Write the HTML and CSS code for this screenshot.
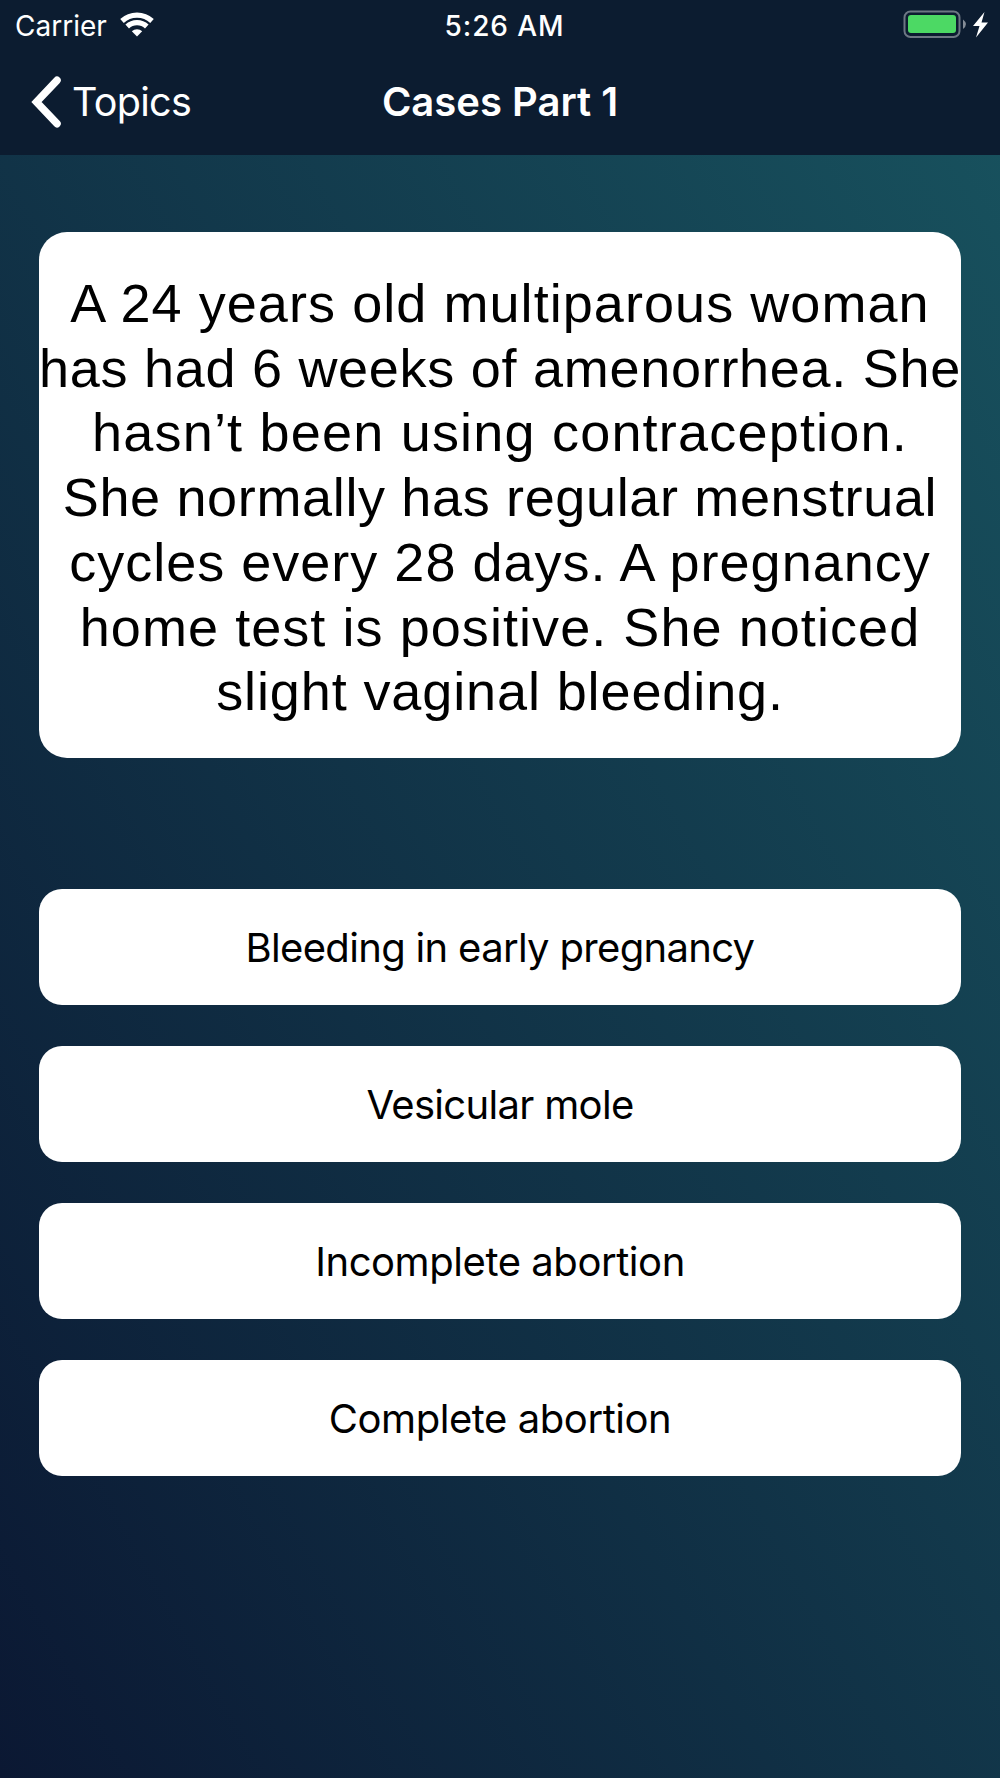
FILE: index.html
```
<!DOCTYPE html>
<html lang="en">
<head>
    <meta charset="UTF-8">
    <meta name="viewport" content="width=device-width, initial-scale=1.0">
    <title>Cases Part 1</title>
    <link rel="stylesheet" href="styles.css">
</head>
<body>
    <header>
        <div class="status-bar">
            <div class="carrier">
                <span class="carrier-name">Carrier</span>
                <svg class="wifi" width="34" height="25" viewBox="0 0 34 25">
                    <path d="M2 9a22 22 0 0 1 30 0" />
                    <path d="M7.200 14.500a14.200 14.200 0 0 1 19.600 0" />
                    <path class="dot" d="M17 24.500l-5.200-5.200a7.500 7.500 0 0 1 10.400 0z" />
                </svg>
            </div>
            <span class="time">5:26 AM</span>
            <div class="power">
                <svg width="88" height="30" viewBox="0 0 88 30">
                    <rect class="battery" x="2.500" y="1.500" width="55" height="25.500" rx="6" />
                    <rect class="charge" x="6" y="5" width="48" height="18" rx="3" />
                    <path class="cap" d="M61 9.500q6 4.700 0 9.400z" />
                    <path class="bolt" d="M82.500 2l-11.500 14h6.500l-3.500 11.500 12-15h-6.500z" />
                </svg>
            </div>
        </div>
        <nav>
            <a class="back" href="#">
                <svg width="30" height="52" viewBox="0 0 30 52">
                    <path d="M26 4.300L5.500 26l20.500 21.700" />
                </svg>
                <span class="back-label">Topics</span>
            </a>
            <h1>Cases Part 1</h1>
        </nav>
    </header>

    <main>
        <p class="question">
            <span class="line l1">A 24 years old multiparous woman</span>
            <span class="line l2">has had 6 weeks of amenorrhea. She</span>
            <span class="line l3">hasn’t been using contraception.</span>
            <span class="line l4">She normally has regular menstrual</span>
            <span class="line l5">cycles every 28 days. A pregnancy</span>
            <span class="line l6">home test is positive. She noticed</span>
            <span class="line l7">slight vaginal bleeding.</span>
        </p>
        <div class="answers">
            <button type="button" class="a1">Bleeding in early pregnancy</button>
            <button type="button" class="a2">Vesicular mole</button>
            <button type="button" class="a3">Incomplete abortion</button>
            <button type="button" class="a4">Complete abortion</button>
        </div>
    </main>
</body>
</html>
```
FILE: styles.css
```
* {
    box-sizing: border-box;
}

body {
    margin: 0;
    min-height: 1778px;
    font-family: 'Inter', sans-serif;
    background: linear-gradient(to top right, #0b1833, #18535f);
}

header {
    height: 155px;
    background-color: #0c1c30;
    color: #ffffff;
}

.status-bar,
nav {
    display: grid;
    grid-template-columns: 1fr auto 1fr;
    align-items: center;
}

.status-bar {
    height: 50px;
    padding: 0 10px 0 15px;
    font-size: 28px;
}

.carrier {
    display: flex;
    align-items: center;
    gap: 13px;
}

.carrier-name {
    margin-top: 2px;
}

.wifi {
    margin-top: -2px;
}

.wifi path {
    fill: none;
    stroke: #ffffff;
    stroke-width: 5.2;
}

.wifi .dot {
    fill: #ffffff;
    stroke: none;
}

.time {
    margin: 2px 0 0 4px;
    font-weight: 500;
    letter-spacing: 0.9px;
}

.power {
    display: flex;
    justify-content: flex-end;
}

.battery {
    fill: none;
    stroke: #6d7783;
    stroke-width: 2;
}

.charge {
    fill: #4cd964;
}

.cap {
    fill: #858d97;
}

.bolt {
    fill: #ffffff;
}

nav {
    height: 104px;
    padding: 0 31px;
}

.back {
    display: flex;
    align-items: center;
    gap: 11px;
    color: #ffffff;
    font-size: 39.5px;
    letter-spacing: -0.7px;
    text-decoration: none;
}

.back path {
    fill: none;
    stroke: #ffffff;
    stroke-width: 7.5;
    stroke-linecap: round;
}

h1 {
    margin: -1px 0 0;
    font-size: 40px;
    font-weight: 600;
}

main {
    padding: 77px 39px;
}

.question {
    display: flex;
    flex-direction: column;
    align-items: center;
    height: 526px;
    margin: 0 0 131px;
    padding-top: 39px;
    border-radius: 28px;
    background-color: #ffffff;
    color: #000000;
    font-family: 'Liberation Sans', sans-serif;
    font-size: 54px;
    line-height: 64.7px;
}

.line {
    white-space: nowrap;
}

.l1,
.l6 {
    letter-spacing: 1.06px;
}

.l2 {
    letter-spacing: 0.72px;
}

.l3 {
    letter-spacing: 1.2px;
}

.l4 {
    letter-spacing: 0.65px;
}

.l5 {
    letter-spacing: 1px;
}

.l7 {
    letter-spacing: 0.89px;
}

.answers {
    display: flex;
    flex-direction: column;
    gap: 41px;
}

button {
    height: 116px;
    border: none;
    border-radius: 23px;
    background-color: #ffffff;
    color: #000000;
    font-family: 'Inter', sans-serif;
    font-size: 40px;
}

.a1,
.a2 {
    letter-spacing: -0.68px;
}

.a3,
.a4 {
    letter-spacing: -0.44px;
}
```
